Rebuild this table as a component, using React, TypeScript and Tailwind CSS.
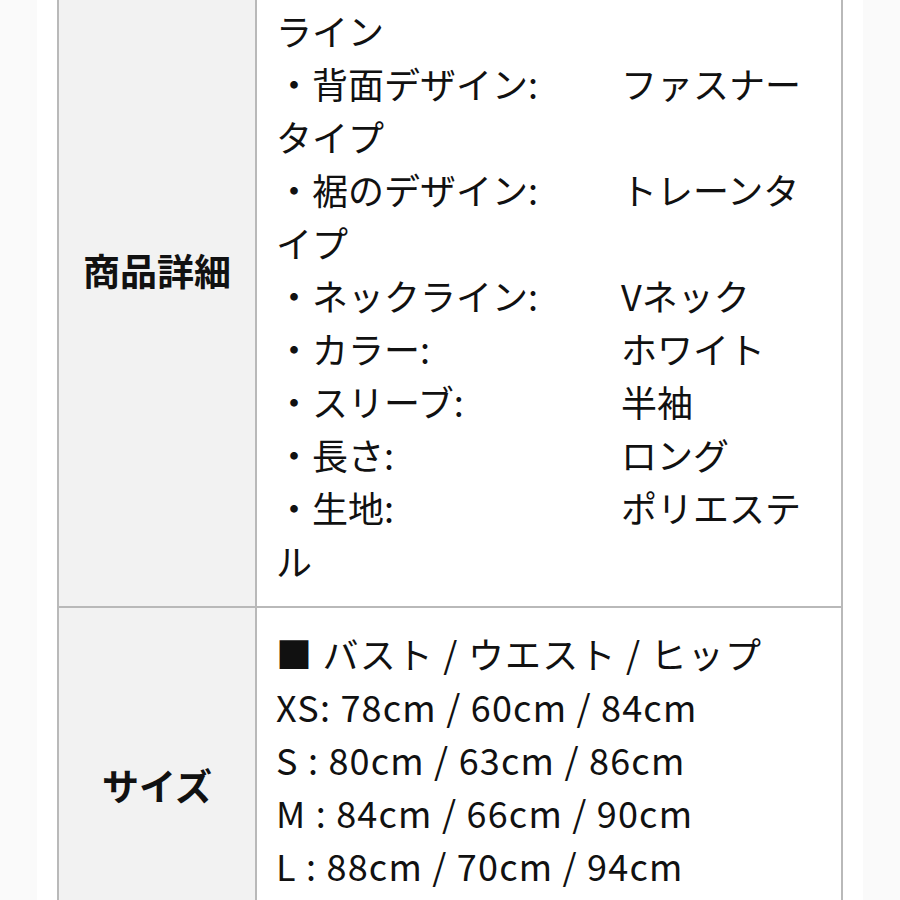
type Spec = { label?: string; value?: string; text?: string };

const details: Spec[] = [
  { label: '・シルエット:', value: 'マーメイド' },
  { text: 'ライン' },
  { label: '・背面デザイン:', value: 'ファスナー' },
  { text: 'タイプ' },
  { label: '・裾のデザイン:', value: 'トレーンタ' },
  { text: 'イプ' },
  { label: '・ネックライン:', value: 'Vネック' },
  { label: '・カラー:', value: 'ホワイト' },
  { label: '・スリーブ:', value: '半袖' },
  { label: '・長さ:', value: 'ロング' },
  { label: '・生地:', value: 'ポリエステ' },
  { text: 'ル' },
];

const sizes = [
  '■ バスト / ウエスト / ヒップ',
  'XS: 78cm / 60cm / 84cm',
  'S : 80cm / 63cm / 86cm',
  'M : 84cm / 66cm / 90cm',
  'L : 88cm / 70cm / 94cm',
  'XL : 92cm / 74cm / 98cm',
];

function Line({ spec }: { spec: Spec }) {
  if (spec.text) return <div className="h-[53px] leading-[53px] whitespace-nowrap">{spec.text}</div>;
  return (
    <div className="h-[53px] leading-[53px] flex whitespace-nowrap">
      <span className="w-[345px] shrink-0">{spec.label}</span>
      <span>{spec.value}</span>
    </div>
  );
}

export default function App() {
  return (
    <div
      className="min-h-screen bg-[#fafafa] flex justify-center overflow-hidden text-[#111] text-[36px]"
      style={{ fontFamily: '"Noto Sans CJK JP", "Noto Sans", sans-serif' }}
    >
      <div className="w-[826px] bg-white px-[20px]">
        <div className="-mt-[67px] border-2 border-[#b9b9b9] grid grid-cols-[198px_1fr]">
          {/* 商品詳細 */}
          <div className="bg-[#f2f2f2] border-r-2 border-b-2 border-[#b9b9b9] flex items-center justify-center font-bold text-[37px]">
            商品詳細
          </div>
          <div className="border-b-2 border-[#b9b9b9] pl-[19px] pr-4 pt-[16px] pb-[19px]">
            {details.map((d, i) => (
              <Line key={i} spec={d} />
            ))}
          </div>

          {/* サイズ */}
          <div className="bg-[#f2f2f2] border-r-2 border-[#b9b9b9] flex items-center justify-center font-bold text-[37px]">
            サイズ
          </div>
          <div className="pl-[19px] pr-4 py-[19px] tracking-[1.2px]">
            {sizes.map((s) => (
              <div key={s} className="h-[53px] leading-[53px] whitespace-nowrap">
                {s}
              </div>
            ))}
          </div>
        </div>
      </div>
    </div>
  );
}
